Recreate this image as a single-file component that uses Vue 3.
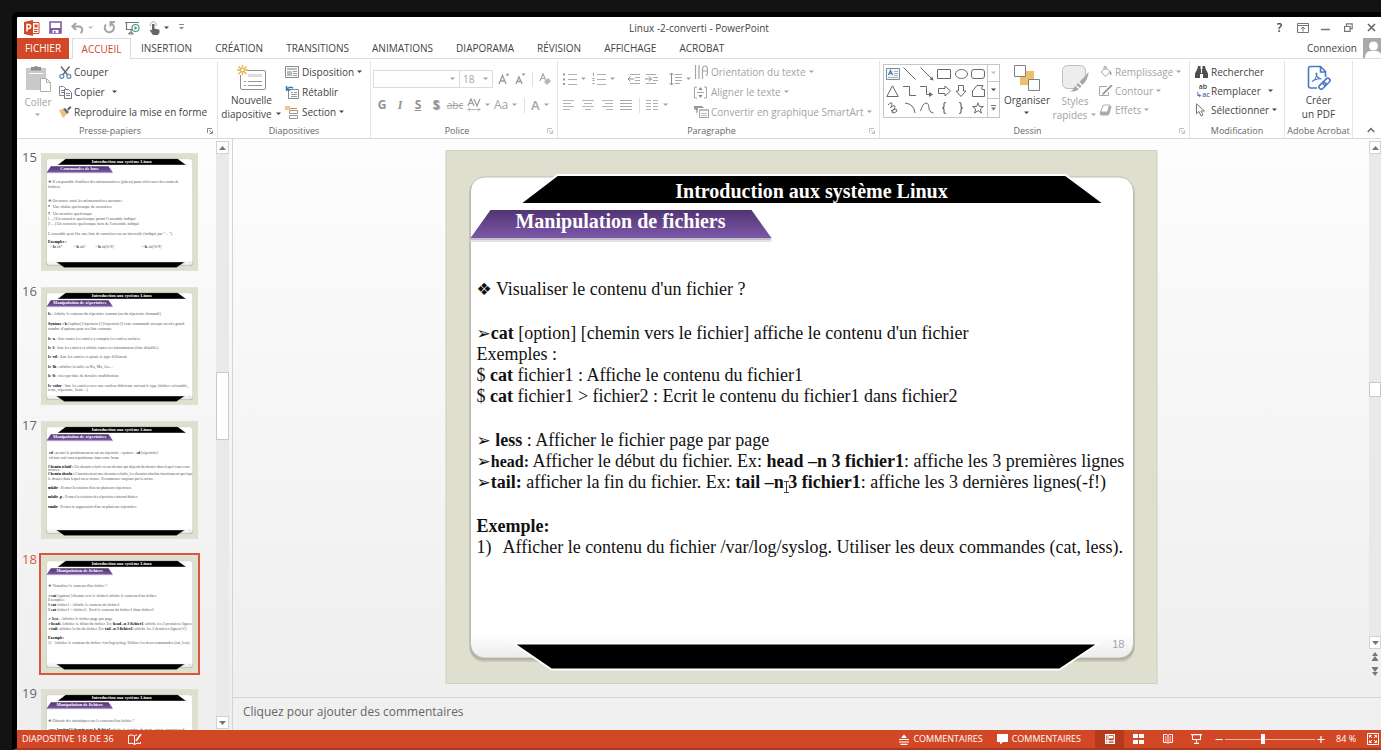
<script setup>
import { h, ref } from 'vue'

const G = '#a6a6a6'
const D = '#6a6a6a'

// name: [width, height, markup]
const icons = {
  ppt: [16, 16, `<path fill="#d24726" d="M0 2 9 0v16L0 14z"/><path fill="none" stroke="#d24726" d="M9 2.500h6v11H9M10 9.500h3.500M10 11.500h3.500"/><path fill="#d24726" d="M10.500 4.500h3v3h-3z"/><path fill="none" stroke="#fff" stroke-width="1.500" d="M3 11.500v-7h1.700q2 0 2 2t-2 2H3"/>`],
  save: [13, 13, `<path fill="none" stroke="#7d5ba6" stroke-width="1.600" d="M1 1h11v11H1z"/><path fill="#7d5ba6" d="M1 7h11v5H1z"/><path fill="#fff" d="M3.500 9h6v3h-6z"/><path fill="#7d5ba6" d="M5 10h1.500v2H5z"/>`],
  undo: [14, 12, `<path fill="none" stroke="${G}" stroke-width="2" d="M5 1 1.500 4.500 5 8M2 4.500h6.500a3.500 3.500 0 0 1 1 6.500"/>`],
  redo: [13, 13, `<path fill="none" stroke="${G}" stroke-width="2" d="M7.500 2.200A4.600 4.600 0 1 1 3 3.500M7.500 5.500V1h4.500"/>`],
  show: [15, 14, `<path fill="none" stroke="#777" stroke-width="1.200" d="M0 1.500h14M1.500 2v6.500h7M6 9v3M3.500 13h5M5 11.500l-1.500 1.500M6.500 11.500 8 13"/><circle cx="10.500" cy="7" r="3.500" fill="#fff" stroke="#4b9c7d" stroke-width="1.200"/><path fill="#4b9c7d" d="m9.500 5 3 2-3 2z"/>`],
  touch: [12, 14, `<path fill="none" stroke="#8ab0cc" d="M1.500 5a3 3 0 1 1 5.500 0"/><path fill="#666" d="M3 3h2.500v4.500l5 1.200v2.800L9 14H4L.8 9.500l1.200-1 1 1z"/>`],
  custom: [6, 7, `<path stroke="#888" d="M0 .5h5"/><path fill="#888" d="M0 3h5L2.500 5.500z"/>`],
  dd: [6, 4, `<path fill="currentColor" d="M0 .5h5L2.500 3z"/>`],
  up: [7, 4, `<path fill="currentColor" d="M0 4h7L3.500 0z"/>`],
  down: [7, 4, `<path fill="currentColor" d="M0 0h7L3.500 4z"/>`],
  dblUp: [8, 9, `<path fill="#777" d="M1 4h6L4 0zM1 8h6L4 4z"/><path stroke="#777" d="M1 8.500h6"/>`],
  dblDown: [8, 9, `<path fill="#777" d="M1 1h6L4 5zM1 5h6L4 9z"/><path stroke="#777" d="M1 .5h6"/>`],
  ribbonOpt: [12, 10, `<path fill="none" stroke="#777" d="M.5.500h11v9H.5zM.5 2.500h11M6 8.500V4.500M4 6l2-2 2 2"/>`],
  min: [9, 9, `<path stroke="#777" stroke-width="1.500" d="M0 6.500h9"/>`],
  restore: [9, 9, `<path fill="none" stroke="#777" stroke-width="1.200" d="M.6 3.500h5.500v4.800H.6zM2.500 3V.8h5.700v4.800H6.500"/>`],
  close: [9, 9, `<path stroke="#666" stroke-width="1.600" d="m1 1 7 7M8 1 1 8"/>`],
  avatar: [18, 20, `<path fill="#a9a9a9" d="M0 0h18v20H0z"/><circle cx="10.500" cy="8" r="4.500" fill="#fff"/><path fill="#fff" d="M2 20q0-6 5-7h7q4 1 4 4v3z"/>`],
  paste: [30, 28, `<path fill="#c9c9c9" d="M3 3h20v22H3z"/><path fill="#8f8f8f" d="M8 2h3a2.500 2.500 0 0 1 4 0h3v3.500H8z"/><path stroke="#fff" d="M6 8.500h14"/><path fill="#fff" stroke="#b0b0b0" d="M17.500 13.500h6l4 4v9h-10zM23.500 13.500v4h4"/>`],
  cut: [13, 13, `<path stroke="#666" stroke-width="1.400" d="M2 .5 8.700 9M10.500.500 3.800 9"/><circle cx="2.800" cy="10.300" r="2" fill="none" stroke="#5f87b5" stroke-width="1.200"/><circle cx="9.800" cy="10.300" r="2" fill="none" stroke="#5f87b5" stroke-width="1.200"/>`],
  copy: [14, 13, `<path fill="#fff" stroke="#888" d="M.5.500h4l3 3v6h-7z"/><path stroke="#5f87b5" d="M2 4.500h3M2 6.500h3"/><path fill="#fff" stroke="#777" d="M5.500 3.500h4l3 3v6h-7z"/><path stroke="#5f87b5" d="M7 7.500h4M7 9.500h4"/>`],
  brush: [14, 12, `<path fill="#edc07c" d="m0 4 4-1 4 5-4 4z"/><path fill="#666" d="m4 3 2-1 4 4-2 2zM8 3l3-3 1.500 1.500-3 3z"/>`],
  newSlide: [29, 26, `<rect x="3.500" y="5.500" width="25" height="19" rx="1.500" fill="#fff" stroke="#909090"/><path fill="#ddd" d="M11 9h14v3H11z"/><path stroke="#999" d="M7 16.500h2M11 16.500h14M7 20.500h2M11 20.500h14"/><path fill="#fff" d="M0 0h10v10H0z"/><path stroke="#e8b04c" stroke-width="1.400" d="M5.500 0v10M0 5h11M1.500 1.500l8 7.500M9.500 1.500 1.500 9"/><circle cx="5.500" cy="5" r="1.800" fill="#fff" stroke="#e8b04c"/>`],
  layout: [14, 12, `<path fill="#fff" stroke="#888" d="M.5.500h13v11H.5z"/><path fill="#bbb" d="M2 2h10v2H2zM2 5h5v5H2z"/><path stroke="#999" d="M8 5.500h4M8 7.500h4M8 9.500h4"/>`],
  reset: [14, 13, `<path fill="#fff" stroke="#888" d="M3.500 3.500h10v9h-10z"/><path stroke="#999" d="M6 6.500h2M9 6.500h3M6 8.500h6M6 10.500h6"/><path fill="none" stroke="#3f78b5" stroke-width="1.500" d="M1.500 0v4h4M1.500 4Q4 0 8 2"/>`],
  section: [13, 13, `<path fill="#f4c88a" d="M0 0h5v4H0z"/><path stroke="#e0863a" d="M5 2.500h7"/><path fill="#fff" stroke="#999" d="M4.500 4.500h8v3h-8zM4.500 9.500h8v3h-8z"/>`],
  launch: [6, 6, `<path fill="none" stroke="currentColor" d="M.5 5V.5H5M2 2l3 3M5.500 2.500v3h-3"/>`],
  eraser: [12, 13, `<path fill="none" stroke="#aaa" stroke-width="1.200" d="M1 8 4 .8 7 8M2 5.500h4"/><path fill="#b5b5b5" d="m5 9 4-4 3 3-4 4z"/>`],
  grow: [13, 12, `<path fill="none" stroke="#9a9a9a" stroke-width="1.300" d="M1 11 4.500 2.500 8 11M2.200 8h4.600"/><path fill="#9a9a9a" d="M7.500 2.500h4L9.500 0z"/>`],
  shrink: [12, 12, `<path fill="none" stroke="#9a9a9a" stroke-width="1.300" d="M1 11 4 4l3 7M2.200 8.500h3.600"/><path fill="#9a9a9a" d="M6.500.500h4L8.500 3z"/>`],
  av: [14, 14, `<path fill="none" stroke="#9a9a9a" stroke-width="1.200" d="M1 8 4 1l3 7M2.200 5.500h3.600M7 1l3 7 3-7"/><path fill="none" stroke="#b5b5b5" d="M1 11.500h12M3 9.500l-2 2 2 2M11 9.500l2 2-2 2"/>`],
  bullets: [14, 12, `<path stroke="#b0b0b0" d="M5 1.500h9M5 6.500h9M5 11.500h9"/><path stroke="#9a9a9a" stroke-width="2" d="M0 1.500h2M0 6.500h2M0 11h2"/>`],
  numbers: [14, 12, `<path stroke="#b0b0b0" d="M5 1.500h9M5 6.500h9M5 11.500h9"/><path stroke="#9a9a9a" d="M1.500 0v3M.5 5.500h2M.5 7.500h2M.5 10.500h2"/>`],
  outdent: [13, 10, `<path stroke="#aaa" d="M3 .5h10M8 3.500h5M8 6.500h5M3 9.500h10"/><path fill="none" stroke="#8f8f8f" d="M7 5H1M3.500 2.500 1 5l2.500 2.500"/>`],
  indent: [13, 10, `<path stroke="#aaa" d="M1 .5h10M8 3.500h5M8 6.500h5M1 9.500h10"/><path fill="none" stroke="#8f8f8f" d="M0 5h6.500M4 2.500 6.500 5 4 7.500"/>`],
  spacing: [13, 14, `<path stroke="#aaa" d="M6 2.500h7M6 5.500h7M6 8.500h7M6 11.500h5"/><path fill="none" stroke="#8f8f8f" d="M2.500 1v12M.5 3l2-2 2 2M.5 11l2 2 2-2"/>`],
  left: [12, 10, `<path stroke="#b5b5b5" d="M0 .5h11M0 3.500h8M0 6.500h11M0 9.500h7"/>`],
  center: [12, 10, `<path stroke="#b5b5b5" d="M0 .5h12M2 3.500h8M0 6.500h12M3 9.500h6"/>`],
  right: [12, 10, `<path stroke="#b5b5b5" d="M1 .5h11M4 3.500h8M1 6.500h11M5 9.500h7"/>`],
  justify: [12, 10, `<path stroke="#a8a8a8" d="M0 .5h12M0 3.500h12M0 6.500h12M0 9.500h12"/>`],
  columns: [13, 10, `<path stroke="#b0b0b0" d="M0 .5h5M7 .5h5M0 3.500h5M7 3.500h5M0 6.500h5M7 6.500h5M0 9.500h5M7 9.500h5"/>`],
  orient: [14, 14, `<path fill="none" stroke="#a5a5a5" stroke-width="1.200" d="M1.500 0v14M5 0v14M8.500 14V5q0-4 2.500-4t2.500 4v4M8.500 6h5M12 9l1.500 2"/>`],
  alignText: [14, 13, `<path fill="none" stroke="#a5a5a5" d="M3 1H.5v11H3M10 1h2.500v11H10M3 6.500h7"/><path fill="#888" d="m4.500 4 2-3 2 3zM4.500 9l2 3 2-3z"/>`],
  smart: [15, 12, `<path fill="#999" d="M0 0h8l2 2H4L3 9 2 4 0 3z"/><path fill="#fff" stroke="#a0a0a0" d="M5.500 3.500h9v8h-9z"/><path fill="#bbb" d="M5 3h10v2H5z"/><path stroke="#bbb" d="M7 7.500h6M7 9.500h6"/>`],
  sText: [14, 12, `<path fill="#f4f7fa" stroke="#7e8a94" d="M.5.500h13v11H.5z"/><path fill="none" stroke="#4778a8" stroke-width="1.200" d="M2.500 7 4.500 2.500 6.500 7M3 5.500h3"/><path stroke="#a5b4c2" d="M8 3.500h4M8 5.500h4M8 7.500h4M2 9.500h10"/>`],
  sLine: [13, 13, `<path stroke="${D}" d="m.5.500 12 12"/>`],
  sArrow: [14, 14, `<path stroke="${D}" d="m.5.500 11 11"/><path fill="${D}" d="m13.500 13.500-1-4-3 3z"/>`],
  sRect: [14, 10, `<path fill="none" stroke="${D}" d="M.5.500h13v9H.5z"/>`],
  sOval: [13, 10, `<ellipse cx="6.500" cy="5" rx="6" ry="4.500" fill="none" stroke="${D}"/>`],
  sRound: [14, 10, `<rect x=".5" y=".5" width="13" height="9" rx="2.500" fill="none" stroke="${D}"/>`],
  sTri: [13, 12, `<path fill="none" stroke="${D}" d="M.8 11.500h11.400L6.500.800z"/>`],
  sElbow: [13, 12, `<path fill="none" stroke="${D}" d="M0 1.500h6.500v9H13"/>`],
  sElbowA: [13, 12, `<path fill="none" stroke="${D}" d="M0 1.500h6.500v8H10"/><path fill="${D}" d="M9 7v5l4-2.500z"/>`],
  sRight: [13, 12, `<path fill="none" stroke="${D}" d="M.5 3.500H7V1l5.500 5L7 11V8.500H.5z"/>`],
  sDown: [12, 12, `<path fill="none" stroke="${D}" d="M3.500.500h5V6H11L6 11.500 1 6h2.500z"/>`],
  sFree: [13, 12, `<path fill="none" stroke="${D}" d="M5 .5h6q-2 2.500-1 4h2.500v7H.5V6z"/>`],
  sScrib: [11, 12, `<path fill="none" stroke="${D}" d="M1 3q4-4 4-1T3 6q5-4 5-1T4 9q5-3 6-1t-4 3q-2 0 0-2"/>`],
  sArc: [12, 12, `<path fill="none" stroke="${D}" d="M1 1q9 1 10 10"/>`],
  sCurve: [14, 12, `<path fill="none" stroke="${D}" d="M.5 9Q3 1 6 1t3 6q1 4 4.500 4"/>`],
  sBraceL: [6, 12, `<path fill="none" stroke="${D}" stroke-width="1.200" d="M5 .5Q3 .5 3 2v2q0 2-2 2 2 0 2 2v2q0 1.500 2 1.500"/>`],
  sBraceR: [6, 12, `<path fill="none" stroke="${D}" stroke-width="1.200" d="M1 .5q2 0 2 1.500v2q0 2 2 2-2 0-2 2v2q0 1.500-2 1.500"/>`],
  sStar: [12, 12, `<path fill="none" stroke="${D}" d="m6 .8 1.400 3.700h4L8.300 7l1.200 4L6 8.700 2.500 11l1.200-4L.6 4.500h4z"/>`],
  more: [6, 6, `<path stroke="#777" d="M0 .5h5"/><path fill="#777" d="M0 2.500h5L2.500 5.500z"/>`],
  arrange: [26, 26, `<path fill="#eac06c" d="M11 6h9v9h-9zM6 12h9v8H6z"/><path fill="#fff" stroke="#808080" d="M.5.500h11v11H.5zM14.500 14.500h11v11h-11z"/>`],
  styles: [27, 27, `<rect x=".5" y=".5" width="23" height="23" rx="5" fill="#ededed" stroke="#bdbdbd"/><path fill="#fff" d="m10 27 16-20 1 12-6 8z"/><path fill="#a8a8a8" d="m26.500 7-9 10 3 3q6-6 6-13zM16 18l3.500 3-1.500 2-4-3zM13 21l4 3q-3 3-9 2.500 3-1 5-5.500z"/>`],
  fill: [13, 13, `<path fill="none" stroke="#aaa" d="m2 7 5-4.500 4 4-4.500 5zM5 5V1.500h2V5"/><path fill="#999" d="M10 5q4 3 2 5-2-1-1-3z"/>`],
  outline: [14, 11, `<path fill="none" stroke="#a5a5a5" d="M8 1.500H.5v9h9V7"/><path stroke="#999" stroke-width="1.800" d="m13 0-8 8"/><path fill="#999" d="m3 10 1-3 2 2z"/>`],
  effects: [13, 12, `<path fill="#aaa" d="M4 1h7l1.500 2-2 7-2 1.500H2L.5 10z"/><path fill="#fff" stroke="#b0b0b0" d="M4.500 1h6l-2 7h-7z"/>`],
  find: [13, 12, `<path fill="#4f4f4f" d="M3 0h2.500v3h2V0H10l.5 2.500 2.500 5V12H8V8H5v4H0V7.500l2.500-5z"/><path stroke="#fff" d="M6.500 3v4"/>`],
  select: [10, 14, `<path fill="#fff" stroke="#777" d="M1.500.800v10L4 8.500l2 4.500 2-1-2-4h3.500z"/>`],
  pdf: [24, 26, `<path fill="none" stroke="#4a79c4" stroke-width="1.600" d="M10 23H3.500q-2 0-2-2V3.500q0-2 2-2h10l5 5V12M13.500 2v5h5"/><path fill="none" stroke="#4a79c4" stroke-width="1.100" d="M5 16.500q4-2 5-7.500-1-2-1 0 1 4 5.500 5-5-1-9.500 2.500"/><g fill="none" stroke="#4a79c4" stroke-width="1.600"><rect x="11.500" y="18.500" width="8" height="4.400" rx="2.200" transform="rotate(-45 15.500 20.700)"/><rect x="15.500" y="14.500" width="8" height="4.400" rx="2.200" transform="rotate(-45 19.500 16.700)"/></g>`],
  caret: [8, 6, `<path fill="none" stroke="#666" stroke-width="1.400" d="m.8 5 3.200-3.500L7.200 5"/>`],
  spell: [14, 11, `<path fill="none" stroke="#fff" d="M6.500 2v8.500M6.500 2Q4 0 .5 1.500v8q4-1 6 1 2-2 6-1V8M6.500 2q1-1 2.500-1"/><path stroke="#fff" stroke-width="1.600" d="m13 0-5 7"/>`],
  notes: [10, 11, `<path fill="#fff" d="M2 4h6L5 .5z"/><path stroke="#fff" stroke-width="1.100" d="M0 5.500h10M0 8h10M1.500 10.400h7"/>`],
  bubble: [11, 10, `<path fill="#fff" d="M0 0h11v8H6l-3 2.500V8H0z"/>`],
  vNormal: [10, 10, `<path fill="none" stroke="#fff" stroke-width="1.300" d="M.7.700h8.600v8.600H.7zM.7 6.800h8.600M3 .7v8.600"/><path fill="#fff" d="M4 2h4v2.500H4z"/>`],
  vSorter: [11, 10, `<path fill="#fff" d="M0 0h5v4H0zM6 0h5v4H6zM0 6h5v4H0zM6 6h5v4H6z"/>`],
  vRead: [10, 10, `<path fill="none" stroke="#fff" d="M.5.500H4l1 1 1-1h3.500v8H6l-1 1-1-1H.5zM5 1v8M2 3h1.500M2 5h1.500M2 7h1.500M6.500 3H8M6.500 5H8M6.500 7H8"/>`],
  vShow: [11, 10, `<path fill="none" stroke="#fff" stroke-width="1.100" d="M0 .6h11M1.500 1v4.500h8V1M5.500 5.500v3M3 9.400h5"/>`],
  fit: [12, 12, `<path fill="none" stroke="#fff" d="M.5.500h11v11H.5zM5 5 2.500 2.500M7 5l2.500-2.500M5 7 2.500 9.500M7 7l2.500 2.500M2.500 4.500v-2h2M9.500 4.500v-2h-2M2.500 7.500v2h2M9.500 7.500v2h-2"/>`],
  ibeam: [5, 12, `<path fill="none" stroke="#444" d="M0 .5h5M2.500 0v12M0 11.500h5"/>`],
  slide: [712, 534, `<defs><linearGradient id="bannerFill" x1="0" y1="0" x2="0" y2="1"><stop offset="0" stop-color="#523473"/><stop offset="1" stop-color="#7c58a8"/></linearGradient><linearGradient id="cardFill" x1="0" y1="0" x2="0" y2="1"><stop offset=".95" stop-color="#fff"/><stop offset="1" stop-color="#ececec"/></linearGradient></defs><path fill="#dfdfd0" stroke="#cfcfc0" d="M.5.500h711v533H.5z"/><rect x="24" y="30" width="665" height="482" rx="14" fill="#c8c8ba"/><rect x="24" y="28" width="665" height="482" rx="14" fill="#b0b0a3"/><rect x="25" y="27" width="663" height="481" rx="14" fill="url(#cardFill)" stroke="#bdbdb0"/><path fill="#000" stroke="#fff" stroke-width="2" d="M74 54 112 25h508l39 29z"/><path fill="#e4e4e4" d="M24 90h303l-2 2H26z"/><path fill="#c4bfcb" d="M25 88h301l-1 2H25z"/><path fill="url(#bannerFill)" d="m25 88 20-28h261l20 28z"/><path fill="#000" stroke="#fff" stroke-width="2" d="m68 493.500 38 26h508l39-26z"/>`],
}

const Ico = (props) => {
  const [w, ht, body] = icons[props.n]
  return h('svg', {
    viewBox: `0 0 ${w} ${ht}`,
    width: props.fluid ? '100%' : w,
    height: props.fluid ? '100%' : ht,
    'aria-hidden': 'true',
    innerHTML: body,
  })
}
Ico.props = ['n', 'fluid']

const tabs = ['INSERTION', 'CRÉATION', 'TRANSITIONS', 'ANIMATIONS', 'DIAPORAMA', 'RÉVISION', 'AFFICHAGE', 'ACROBAT']
const shapes = ['sText', 'sLine', 'sArrow', 'sRect', 'sOval', 'sRound', 'sTri', 'sElbow', 'sElbowA', 'sRight', 'sDown', 'sFree', 'sScrib', 'sArc', 'sCurve', 'sBraceL', 'sBraceR', 'sStar']

const zoom = ref(42)

// Each run of text is [text, bold?]; a line is { y, x, runs }
const b = (t) => [t, true]
const r = (t) => [t, false]
const line = (y, ...runs) => ({ x: 32, y, runs })
const thumbs = [
  {
    n: 15, title: 'Commandes de base', lines: [
      line(137, r("❖ Il est possible d'utiliser des métacaractères (jokers) pour référencer des noms de")),
      line(159, r('fichiers.')),
      line(222, r('❖ On trouve ainsi les métacaractères suivants :')),
      line(249, b('*'), r('\u00a0\u00a0\u00a0Une chaîne quelconque de caractères')),
      line(281, b('?'), r('\u00a0\u00a0\u00a0Un caractère quelconque')),
      line(305, r("[…] Un caractère quelconque parmi l'ensemble indiqué")),
      line(328, r("[!…] Un caractère quelconque hors de l'ensemble indiqué")),
      line(373, r("L'ensemble peut être une liste de caractères ou un intervalle (indiqué par \" – \")")),
      line(408, b('Exemples :')),
      { x: 40, y: 429, runs: [r('> '), b('ls'), r(' ab*')] },
      { x: 146, y: 429, runs: [r('> '), b('ls'), r(' ab?')] },
      { x: 245, y: 429, runs: [r('> '), b('ls'), r(' ab[0-9]')] },
      { x: 456, y: 429, runs: [r('> '), b('ls'), r(' ab[!0-9]')] },
    ],
  },
  {
    n: 16, title: 'Manipulation de répertoires', lines: [
      line(127, b('ls'), r(' : Affiche le contenu du répertoire courant (ou du répertoire demandé)')),
      line(173, b('Syntaxe : ls'), r(' [option] [répertoire1] [répertoire2] cette commande accepte un très grand')),
      line(194, r("nombre d'options pour ses liste courante")),
      line(238, b('ls -a'), r(' : liste toutes les entrées y compris les entrées cachées')),
      line(280, b('ls -l'), r(' : liste les entrées et affiche toutes les informations (liste détaillée)')),
      line(322, b('ls -rtl'), r(" : liste les entrées et ajoute le type d'élément")),
      line(366, b('ls -lh'), r(' : afficher la taille en Ko, Mo, Go…')),
      line(409, b('ls -lt'), r(' : trier par date de dernière modification')),
      line(453, b('ls -color'), r(' : liste les entrées avec une couleur différente suivant le type (fichier exécutable,')),
      line(472, r('texte, répertoire, liens…)')),
    ],
  },
  {
    n: 17, title: 'Manipulation de répertoires', small: true, lines: [
      line(149, b('\u00a0cd'), r(' : permet le positionnement sur un répertoire : syntaxe : '), b('cd'), r(' [répertoire]')),
      line(170, r('\u00a0cd tout seul vous repositionne dans votre home')),
      line(211, b('Chemin relatif :'), r(' Un chemin relatif est un chemin qui dépend du dossier dans lequel vous vous')),
      line(228, r('trouvez.')),
      line(246, b('Chemin absolu :'), r(' Contrairement aux chemins relatifs, les chemins absolus fonctionnent quel que')),
      line(265, r('le dossier dans lequel on se trouve. Il commence toujours par la racine')),
      line(307, b('mkdir'), r(" : Permet la création d'un ou plusieurs répertoires")),
      line(350, b('mkdir -p'), r(' : Permet la création des répertoires intermédiaires')),
      line(392, b('rmdir'), r(" : Permet la suppression d'un ou plusieurs répertoires")),
    ],
  },
  {
    n: 18, title: 'Manipulation de fichiers', on: true, lines: [
      line(145, r("❖ Visualiser le contenu d'un fichier ?")),
      line(188, b('➢cat'), r(" [option] [chemin vers le fichier] affiche le contenu d'un fichier")),
      line(210, r('Exemples :')),
      line(231, r('$ '), b('cat'), r(' fichier1 : Affiche le contenu du fichier1')),
      line(252, r('$ '), b('cat'), r(' fichier1 > fichier2 : Ecrit le contenu du fichier1 dans fichier2')),
      line(296, b('➢ less'), r(' : Afficher le fichier page par page')),
      line(317, b('➢head:'), r(' Afficher le début du fichier. Ex: '), b('head –n 3 fichier1'), r(': affiche les 3 premières lignes')),
      line(339, b('➢tail:'), r(' afficher la fin du fichier. Ex: '), b('tail –n 3 fichier1'), r(': affiche les 3 dernières lignes(-f!)')),
      line(382, b('Exemple:')),
      line(403, r('1) \u00a0 Afficher le contenu du fichier /var/log/syslog. Utiliser les deux commandes (cat, less).')),
    ],
  },
  {
    n: 19, title: 'Manipulation de fichiers', lines: [
      line(147, r("❖ Obtenir des statistiques sur le contenu d'un fichier ?")),
      line(190, b('➢wc [option] [chemin vers le fichier]'), r(' affiche le nombre de mots, octets, caractères d')),
    ],
  },
]
</script>

<template>
  <div class="screen">
    <div class="window">
      <header class="titlebar">
        <div class="qat">
          <Ico n="ppt" />
          <button aria-label="Enregistrer"><Ico n="save" /></button>
          <button class="faint" aria-label="Annuler"><Ico n="undo" /><Ico n="dd" /></button>
          <button aria-label="Répéter"><Ico n="redo" /></button>
          <button aria-label="Diaporama"><Ico n="show" /></button>
          <button aria-label="Mode tactile"><Ico n="touch" /><Ico n="dd" /></button>
          <button aria-label="Personnaliser"><Ico n="custom" /></button>
        </div>
        <div class="doc">Linux -2-converti - PowerPoint</div>
        <div class="winbtns">
          <button class="help">?</button>
          <button aria-label="Options du ruban"><Ico n="ribbonOpt" /></button>
          <button aria-label="Réduire"><Ico n="min" /></button>
          <button aria-label="Restaurer"><Ico n="restore" /></button>
          <button aria-label="Fermer"><Ico n="close" /></button>
        </div>
      </header>

      <nav class="tabs">
        <button class="file">FICHIER</button>
        <button class="active">ACCUEIL</button>
        <button v-for="t in tabs" :key="t" class="tab">{{ t }}</button>
        <a class="login" href="#">Connexion</a>
        <Ico n="avatar" />
      </nav>

      <section class="ribbon">
        <div class="group g-clip">
          <div class="body">
            <button class="big off"><Ico n="paste" /><span>Coller</span><Ico n="dd" /></button>
            <div class="rows">
              <button><i><Ico n="cut" /></i>Couper</button>
              <button><i><Ico n="copy" /></i>Copier<Ico n="dd" class="far" /></button>
              <button><i><Ico n="brush" /></i>Reproduire la mise en forme</button>
            </div>
          </div>
          <footer class="more">Presse-papiers<Ico n="launch" class="launch" /></footer>
        </div>

        <div class="group g-slides">
          <div class="body">
            <button class="big"><Ico n="newSlide" /><span>Nouvelle</span><span>diapositive <Ico n="dd" /></span></button>
            <div class="rows">
              <button><i><Ico n="layout" /></i>Disposition<Ico n="dd" /></button>
              <button><i><Ico n="reset" /></i>Rétablir</button>
              <button><i><Ico n="section" /></i>Section<Ico n="dd" /></button>
            </div>
          </div>
          <footer>Diapositives</footer>
        </div>

        <div class="group g-font off">
          <div class="body stack">
            <div class="fontrow">
              <button class="combo name" aria-label="Police"><Ico n="dd" /></button>
              <button class="combo size" aria-label="Taille">18<Ico n="dd" /></button>
              <button class="letter" aria-label="Agrandir"><Ico n="grow" /></button>
              <button class="letter" aria-label="Réduire"><Ico n="shrink" /></button>
              <span class="vsep"></span>
              <button aria-label="Effacer la mise en forme"><Ico n="eraser" /></button>
            </div>
            <div class="fmtrow">
              <button class="bold">G</button>
              <button class="bold ital">I</button>
              <button class="bold und">S</button>
              <button class="bold shad">S</button>
              <button class="strike">abc</button>
              <button aria-label="Espacement"><Ico n="av" /><Ico n="dd" /></button>
              <button class="case">Aa<Ico n="dd" /></button>
              <span class="vsep"></span>
              <button class="color">A<Ico n="dd" /></button>
            </div>
          </div>
          <footer class="more">Police<Ico n="launch" class="launch" /></footer>
        </div>

        <div class="group g-para off">
          <div class="body">
            <div class="stack">
              <div class="para1">
                <button aria-label="Puces"><Ico n="bullets" /><Ico n="dd" /></button>
                <button aria-label="Numérotation"><Ico n="numbers" /><Ico n="dd" /></button>
                <span class="vsep"></span>
                <button aria-label="Réduire le retrait"><Ico n="outdent" /></button>
                <button aria-label="Augmenter le retrait"><Ico n="indent" /></button>
                <span class="vsep"></span>
                <button aria-label="Interligne"><Ico n="spacing" /><Ico n="dd" /></button>
              </div>
              <div class="para2">
                <button aria-label="Gauche"><Ico n="left" /></button>
                <button aria-label="Centrer"><Ico n="center" /></button>
                <button aria-label="Droite"><Ico n="right" /></button>
                <button aria-label="Justifier"><Ico n="justify" /></button>
                <span class="vsep"></span>
                <button aria-label="Colonnes"><Ico n="columns" /><Ico n="dd" /></button>
              </div>
            </div>
            <div class="rows">
              <button><i><Ico n="orient" /></i>Orientation du texte<Ico n="dd" /></button>
              <button><i><Ico n="alignText" /></i>Aligner le texte<Ico n="dd" /></button>
              <button><i><Ico n="smart" /></i>Convertir en graphique SmartArt<Ico n="dd" /></button>
            </div>
          </div>
          <footer class="more">Paragraphe<Ico n="launch" class="launch" /></footer>
        </div>

        <div class="group g-draw">
          <div class="body">
            <div class="gallery">
              <div class="cells">
                <button v-for="s in shapes" :key="s" :aria-label="s"><Ico :n="s" /></button>
              </div>
              <div class="gscroll">
                <button class="dim" aria-label="Haut"><Ico n="dd" /></button>
                <button aria-label="Bas"><Ico n="dd" /></button>
                <button aria-label="Autres"><Ico n="more" /></button>
              </div>
            </div>
            <button class="big"><Ico n="arrange" /><span>Organiser</span><Ico n="dd" /></button>
            <button class="big off"><Ico n="styles" /><span>Styles</span><span>rapides <Ico n="dd" /></span></button>
            <div class="rows tight off">
              <button><i><Ico n="fill" /></i>Remplissage<Ico n="dd" /></button>
              <button><i><Ico n="outline" /></i>Contour<Ico n="dd" /></button>
              <button><i><Ico n="effects" /></i>Effets<Ico n="dd" /></button>
            </div>
          </div>
          <footer class="more">Dessin<Ico n="launch" class="launch off" /></footer>
        </div>

        <div class="group g-edit">
          <div class="body">
            <div class="rows tight">
              <button><i><Ico n="find" /></i>Rechercher</button>
              <button><i class="abac"><b>ab</b><b>↳ac</b></i>Remplacer<Ico n="dd" class="far" /></button>
              <button><i><Ico n="select" /></i>Sélectionner<Ico n="dd" /></button>
            </div>
          </div>
          <footer>Modification</footer>
        </div>

        <div class="group g-pdf">
          <div class="body">
            <button class="big"><Ico n="pdf" /><span>Créer</span><span>un PDF</span></button>
          </div>
          <footer>Adobe Acrobat</footer>
        </div>

        <button class="collapse" aria-label="Réduire le ruban"><Ico n="caret" /></button>
      </section>

      <main class="work">
        <aside class="panel">
          <ol>
            <li v-for="t in thumbs" :key="t.n" :class="{ on: t.on }">
              <span class="num">{{ t.n }}</span>
              <div class="thumb">
                <Ico n="slide" fluid class="frame" />
                <svg viewBox="0 0 712 534" class="mini" :class="{ small: t.small }">
                  <text class="mt" x="366" y="47" text-anchor="middle">Introduction aux système Linux</text>
                  <text class="mt" x="175" y="78" text-anchor="middle">{{ t.title }}</text>
                  <text v-for="(l, i) in t.lines" :key="i" :x="l.x" :y="l.y" class="ml">
                    <tspan v-for="(s, j) in l.runs" :key="j" :class="{ mb: s[1] }">{{ s[0] }}</tspan>
                  </text>
                  <text x="668" y="498" class="mn">{{ t.n }}</text>
                </svg>
              </div>
            </li>
          </ol>
        </aside>
        <div class="sbar left">
          <button aria-label="Défiler vers le haut"><Ico n="up" /></button>
          <div class="track"><div class="grip"></div></div>
          <button aria-label="Défiler vers le bas"><Ico n="down" /></button>
        </div>

        <div class="center">
          <div class="stage">
            <div class="canvas">
              <article class="slide">
                <Ico n="slide" fluid class="frame" />
                <h1>Introduction aux système Linux</h1>
                <h2>Manipulation de fichiers</h2>
                <div class="text">
                  <p><span class="mark">❖</span> Visualiser le contenu d'un fichier ?</p>
                  <p class="blank"></p>
                  <p><span class="mark">➢</span><b>cat</b> [option] [chemin vers le fichier] affiche le contenu d'un fichier</p>
                  <p>Exemples :</p>
                  <p>$ <b>cat</b> fichier1 : Affiche le contenu du fichier1</p>
                  <p>$ <b>cat</b> fichier1 &gt; fichier2 : Ecrit le contenu du fichier1 dans fichier2</p>
                  <p class="blank"></p>
                  <p><span class="mark">➢</span> <b>less</b> : Afficher le fichier page par page</p>
                  <p><span class="mark">➢</span><b class="sm">head:</b> Afficher le début du fichier. Ex: <b>head –n 3 fichier1</b>: affiche les 3 premières lignes</p>
                  <p><span class="mark">➢</span><b>tail:</b> afficher la fin du fichier. Ex: <b>tail –n<span class="caret"><Ico n="ibeam" /></span> 3 fichier1</b>: affiche les 3 dernières lignes(-f!)</p>
                  <p class="blank"></p>
                  <p><b>Exemple:</b></p>
                  <p><span class="item">1)</span>Afficher le contenu du fichier /var/log/syslog. Utiliser les deux commandes (cat, less).</p>
                </div>
                <span class="page">18</span>
              </article>
            </div>
            <div class="sbar right">
              <button aria-label="Page précédente"><Ico n="up" /></button>
              <div class="track"><div class="grip"></div></div>
              <button aria-label="Page suivante"><Ico n="down" /></button>
              <button class="flat" aria-label="Diapositive précédente"><Ico n="dblUp" /></button>
              <button class="flat" aria-label="Diapositive suivante"><Ico n="dblDown" /></button>
            </div>
          </div>
          <div class="notes">Cliquez pour ajouter des commentaires</div>
        </div>
      </main>

      <footer class="status">
        <span class="pos">DIAPOSITIVE 18 DE 36</span>
        <Ico n="spell" />
        <span class="spring"></span>
        <button class="cmt"><Ico n="notes" />COMMENTAIRES</button>
        <button class="cmt"><Ico n="bubble" />COMMENTAIRES</button>
        <button class="view sel" aria-label="Normal"><Ico n="vNormal" /></button>
        <button class="view" aria-label="Trieuse"><Ico n="vSorter" /></button>
        <button class="view" aria-label="Lecture"><Ico n="vRead" /></button>
        <button class="view" aria-label="Diaporama"><Ico n="vShow" /></button>
        <button class="pm minus">−</button>
        <input v-model="zoom" type="range" min="0" max="100" aria-label="Zoom" />
        <button class="pm">+</button>
        <span class="pct">84 %</span>
        <Ico n="fit" />
      </footer>
    </div>
  </div>
</template>

<style>
body { margin: 0; background: #131313; }
</style>

<style scoped>
* { box-sizing: border-box; }
svg { display: block; flex: none; }
button { font: inherit; color: inherit; background: none; border: 0; padding: 0; margin: 0; display: flex; align-items: center; white-space: nowrap; }
.screen { height: 100vh; padding: 12px 0 0 12px; background: #131313; overflow: hidden; }
.window { height: 100%; border: solid #000; border-width: 5px 0 2px 5px; border-bottom-color: #a5391f; border-radius: 6px 0 0 0; background: #fff; color: #444; font: 10px/14px "Open Sans", "Noto Sans", sans-serif; display: flex; flex-direction: column; }

.titlebar { height: 21px; display: grid; grid-template-columns: 1fr auto 1fr; align-items: center; flex: none; }
.qat { display: flex; align-items: center; gap: 9px; padding-left: 7px; }
.qat button { gap: 3px; }
.faint { color: #bbb; }
.winbtns { display: grid; grid-template-columns: repeat(5, 23px); justify-content: end; margin-right: -2px; }
.winbtns button { justify-content: center; }
.help { font-weight: 600; font-size: 12px; }

.tabs { height: 21px; display: flex; align-items: center; border-bottom: 1px solid #dcdcdc; flex: none; }
.tabs button { height: 21px; justify-content: center; }
.tabs .file { width: 52px; background: #d24726; color: #fff; margin-right: 3px; }
.tabs .active { width: 59px; color: #d24726; background: #fff; border: 1px solid #dcdcdc; border-bottom: 0; margin-right: 10px; }
.tabs .tab { margin-right: 23px; }
.login { margin-left: auto; margin-right: 6px; color: #444; text-decoration: none; }

.ribbon { height: 80px; display: flex; border-bottom: 1px solid #d8d8d8; flex: none; }
.group { border-right: 1px solid #e4e4e4; padding-top: 1px; margin-top: 2px; display: flex; flex-direction: column; flex: none; }
.group .body { display: flex; height: 60px; }
.group footer { position: relative; text-align: center; font-size: 9px; color: #666; margin-top: auto; }
.group footer.more { padding-right: 14px; }
.launch { position: absolute; right: 4px; top: 4px; color: #888; }
.off { color: #a3a3a3; }
.off .launch, .launch.off { color: #c0c0c0; }
.g-clip { width: 201px; }
.g-slides { width: 153px; }
.g-font { width: 187px; }
.g-para { width: 322px; }
.g-draw { width: 310px; }
.g-edit { width: 95px; }
.g-pdf { width: 68px; }
.big { flex-direction: column; align-items: center; flex: none; padding-top: 3px; }
.big > svg:first-child { margin-bottom: 2px; }
.big > svg:last-child { margin-top: 4px; }
.big span { display: flex; align-items: center; gap: 4px; }
.g-clip .big { width: 42px; }
.g-slides .big { width: 67px; }
.rows { display: flex; flex-direction: column; }
.rows button { height: 20px; }
.rows i { width: 17px; flex: none; font-style: normal; }
.g-clip i { width: 15px; }
.rows button > svg { margin-left: 3px; }
.rows button > svg.far { margin-left: 7px; }
.rows.tight button { height: 19px; }

.group .stack { display: flex; flex-direction: column; }
.fontrow, .fmtrow, .para1, .para2 { display: flex; align-items: center; }
.fontrow, .fmtrow { padding-left: 2px; }
.fontrow, .para1 { height: 34px; }
.fmtrow, .para2 { height: 18px; }
.combo { height: 18px; border: 1px solid #dcdcdc; justify-content: space-between; padding: 0 3px; }
.combo.name { width: 86px; justify-content: flex-end; border-right: 0; }
.combo.size { width: 34px; margin-right: 5px; }
.letter { width: 17px; }
.vsep { width: 1px; height: 15px; background: #e0e0e0; margin: 0 6px 0 0; }
.bold { font-weight: 700; width: 18px; justify-content: center; font-size: 12px; color: #929292; }
.ital { font-family: "Liberation Serif", serif; font-style: italic; }
.und { text-decoration: underline; }
.shad { text-shadow: 1px 1px 1px #999; }
.strike { text-decoration: line-through; width: 20px; justify-content: center; margin-right: 2px; }
.fmtrow button svg + svg, .case svg, .color svg { margin-left: 4px; }
.case { width: 30px; margin-left: 3px; font-size: 12px; }
.color { font-size: 13px; font-weight: 600; }

.g-para .stack { width: 136px; padding-left: 5px; }
.para1 button svg + svg, .para2 button svg + svg { margin-left: 4px; }
.para1 button { margin-right: 5px; }
.para2 button { margin-right: 7px; }

.gallery { display: flex; margin: 2px 3px 0 3px; height: 54px; width: 117px; border: 1px solid #c6c6c6; flex: none; }
.cells { flex: 1; display: grid; grid-template-columns: repeat(6, 1fr); grid-auto-rows: 1fr; }
.cells button { justify-content: center; }
.gscroll { width: 12px; border-left: 1px solid #c6c6c6; display: grid; }
.gscroll button { justify-content: center; }
.gscroll button + button { border-top: 1px solid #c6c6c6; }
.gscroll .dim { color: #bbb; }
.g-draw .big { width: 48px; }
.g-draw .rows i { width: 16px; }
.g-edit .body { padding-left: 5px; }
.g-edit i { width: 16px; }
.abac b { display: block; font-size: 7px; line-height: 8px; font-weight: 600; }
.abac b + b { color: #4a6f9c; }
.g-pdf .big { width: 100%; }
.collapse { margin-left: auto; align-self: flex-end; padding: 0 6px 5px; }

.work { flex: 1; min-height: 0; display: flex; background: linear-gradient(#fdfdfd, #f6f6f6 45%, #efeeee); }
.panel { width: 199px; flex: none; overflow: hidden; }
ol { list-style: none; margin: 0; padding: 14px 0 0 5px; display: grid; gap: 16px; }
li { display: flex; height: 118px; }
.num { width: 19px; flex: none; font-size: 13px; line-height: 8px; color: #666; }
.thumb { position: relative; width: 157px; height: 118px; }
.on .num { color: #d9573a; }
.on .thumb { outline: 2px solid #d9573a; }
.frame, .mini { position: absolute; inset: 0; width: 100%; height: 100%; }
.mini { font-family: "Liberation Serif", "DejaVu Sans", serif; }
.mt { font-size: 20px; font-weight: 700; fill: #fff; }
.ml { font-size: 18px; fill: #555; }
.small .ml { font-size: 17px; }
.mb { font-weight: 700; fill: #000; }
.mn { font-size: 11px; fill: #999; }

.sbar { display: flex; flex-direction: column; width: 13px; flex: none; }
.sbar button { height: 13px; justify-content: center; background: #fff; border: 1px solid #d2d2d2; color: #777; flex: none; }
.sbar .flat { background: none; border: 0; height: 15px; }
.track { flex: 1; background: #e9e9e9; display: flex; flex-direction: column; }
.grip { background: #fff; border: 1px solid #c9c9c9; }
.left { padding: 2px 0 1px; }
.left .grip { margin-top: 218px; height: 68px; }
.right { width: 12px; padding-top: 2px; padding-bottom: 18px; }
.right .grip { margin-top: 228px; height: 15px; }
.center { flex: 1; min-width: 0; margin-left: 3px; border-left: 1px solid #d4d4d4; display: flex; flex-direction: column; }
.stage { flex: 1; display: flex; min-height: 0; }
.canvas { flex: 1; display: flex; justify-content: center; align-items: flex-start; padding-top: 11px; }
.slide { position: relative; width: 713px; height: 534px; flex: none; font: 18px/21px "Liberation Serif", "DejaVu Sans", serif; color: #111; }
h1, h2 { position: relative; margin: 0; color: #fff; text-align: center; font-size: 20px; }
h1 { line-height: 28px; padding: 27px 55px 5px 76px; }
h2 { line-height: 22px; margin: 0 406px 47px 45px; }
.text { position: relative; padding-left: 32px; white-space: nowrap; }
p { margin: 0; height: 21px; }
.blank { height: 23px; }
.mark { font-family: "DejaVu Sans", sans-serif; font-size: 17px; line-height: 1; }
.sm { font-size: 16px; }
.item { display: inline-block; width: 26px; }
.caret { position: relative; }
.caret svg { position: absolute; left: 0; top: 9px; }
.page { position: absolute; right: 33px; top: 484px; font: 11px/20px "Liberation Sans", sans-serif; color: #a5a5a5; }
.notes { height: 33px; border-top: 1px solid #d4d4d4; background: #f1f0f0; padding-left: 10px; font-size: 12px; line-height: 28px; color: #666; flex: none; }

.status { height: 18px; display: flex; align-items: center; background: #d24726; color: #fff; font-size: 9px; padding-left: 5px; flex: none; }
.pos { margin-right: 14px; }
.spring { flex: 1; }
.cmt { gap: 4px; margin-right: 14px; }
.view { width: 29px; height: 18px; justify-content: center; }
.view.sel { background: #b53a1c; }
.pm { font-size: 15px; width: 12px; justify-content: center; }
.minus { margin-left: 2px; }
input[type=range] { appearance: none; width: 90px; height: 12px; margin: 0; background: linear-gradient(#f0b5a5, #f0b5a5) center / 100% 1px no-repeat; }
input[type=range]::-webkit-slider-thumb { appearance: none; width: 4px; height: 10px; background: #fff; }
.pct { width: 28px; margin: 0 3px 0 9px; }
.status > svg:last-child { margin-right: 2px; }
</style>
